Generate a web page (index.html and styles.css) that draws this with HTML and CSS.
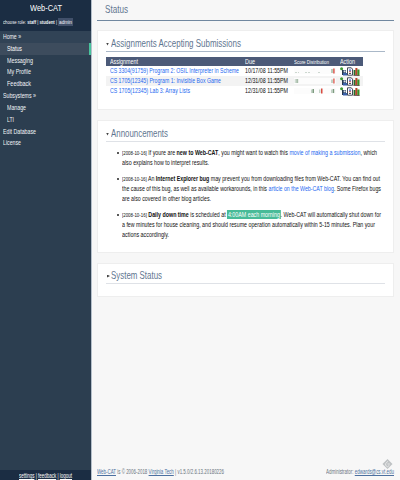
FILE: index.html
```html
<!DOCTYPE html>
<html lang="en">
<head>
<meta charset="utf-8">
<title>Web-CAT: Status</title>
<link rel="stylesheet" href="styles.css">
</head>
<body>
<svg class="defs" width="0" height="0">
  <symbol id="actions" viewBox="0 0 20 9">
    <circle cx="1.6" cy="1.8" r="1.5" fill="#3d9b35"/>
    <path d="M2 3h4v5H2z" fill="#26374f"/>
    <path d="M3.6 3.4h2v2h-2z" fill="#d5e4f4"/>
    <path d="M3 6h4v2.5H3z" fill="#3c61a8"/>
    <path d="M7.5.8h3.800l1.200 1.400v6h-5z" fill="#fff" stroke="#2f3446" stroke-width=".9"/>
    <path d="M9 2.4h2v1.300H9z" fill="#3b5fd0"/>
    <path d="M9 4.3h2v1H9z" fill="#b44"/>
    <path d="M9 6h2v1H9z" fill="#555"/>
    <path d="M13.6 3h2v5h-2z" fill="#26702a"/>
    <path d="M15.4 1h2v7h-2z" fill="#bb432b"/>
    <path d="M17.3 2.5h2.2v5.8h-2.2z" fill="#3b8f26"/>
    <path d="M13.4 8h6.2v.7h-6.2z" fill="#422"/>
  </symbol>
</svg>
<div class="page">
  <aside class="sidebar">
    <header class="brand">
      <div class="name"><span class="fit" data-w="32">Web-CAT</span></div>
      <div class="roles"><span class="fit" data-w="54">choose role: <b>staff</b> | <b>student</b> |</span><span class="role"><span class="fit" data-w="13">admin</span></span></div>
    </header>
    <nav>
      <a><span class="fit" data-w="18">Home »</span></a>
      <a class="sub active"><span class="fit" data-w="15">Status</span></a>
      <a class="sub"><span class="fit" data-w="26">Messaging</span></a>
      <a class="sub"><span class="fit" data-w="24">My Profile</span></a>
      <a class="sub"><span class="fit" data-w="24">Feedback</span></a>
      <a><span class="fit" data-w="33">Subsystems »</span></a>
      <a class="sub"><span class="fit" data-w="19">Manage</span></a>
      <a class="sub"><span class="fit" data-w="7">LTI</span></a>
      <a><span class="fit" data-w="33">Edit Database</span></a>
      <a><span class="fit" data-w="18">License</span></a>
    </nav>
    <footer class="session"><span class="fit" data-w="53"><u>settings</u> | <u>feedback</u> | <u>logout</u></span></footer>
  </aside>
  <main>
    <h1><span class="fit" data-w="23">Status</span></h1>
    <section class="card assignments">
      <h2><i class="open"></i><span class="fit" data-w="130">Assignments Accepting Submissions</span></h2>
      <div class="table">
        <div class="row head">
          <span><span class="fit" data-w="28">Assignment</span></span>
          <span><span class="fit" data-w="10">Due</span></span>
          <span><span class="fit small" data-w="35">Score Distribution</span></span>
          <span><span class="fit" data-w="15">Action</span></span>
        </div>
        <div class="row">
          <a><span class="fit" data-w="129">CS 3304(91759) Program 2: OSIL Interpreter in Scheme</span></a>
          <span><span class="fit" data-w="43">10/17/08 11:55PM</span></span>
          <svg class="dist" viewBox="0 0 42 6"><path d="M1 4.5h2M4 4.5h1M11 4.5h2M14 4.5h2M24 4.5h2" stroke="#b9c8bd" stroke-width=".7"/><path d="M37 1h2v4h-2z" fill="#b9cdbd"/><path d="M39.2.5h1.4v5h-1.4z" fill="#d94b41"/></svg>
          <svg class="icons"><use href="#actions"/></svg>
        </div>
        <div class="row alt">
          <a><span class="fit" data-w="111">CS 1705(12345) Program 1: Invisible Box Game</span></a>
          <span><span class="fit" data-w="43">12/31/08 11:55PM</span></span>
          <svg class="dist" viewBox="0 0 42 6"><path d="M.8 1h1v4h-1zM37 1.5h2v3.5h-2z" fill="#c4d3c7"/><path d="M2.2 1h2v4h-2z" fill="#a8bdaa"/><path d="M39.2.5h1.4v5h-1.4z" fill="#de6157"/></svg>
          <svg class="icons"><use href="#actions"/></svg>
        </div>
        <div class="row">
          <a><span class="fit" data-w="80">CS 1705(12345) Lab 3: Array Lists</span></a>
          <span><span class="fit" data-w="43">12/31/08 11:55PM</span></span>
          <svg class="dist" viewBox="0 0 42 6"><path d="M17 1.5h1.5v3.5H17zM25 1.5h1.5v3.5H25zM37 1.5h1.5v3.5H37z" fill="#c4d3c7"/><path d="M18.5 1H20v4h-1.5zM38.7 1h1.5v4h-1.5z" fill="#7e9c80"/><path d="M27 .5h1.5v5H27z" fill="#d94b41"/></svg>
          <svg class="icons"><use href="#actions"/></svg>
        </div>
      </div>
    </section>
    <section class="card announcements">
      <h2><i class="open"></i><span class="fit" data-w="57">Announcements</span></h2>
      <ul>
        <li>
          <p><span class="fit" data-w="255"><small>[2008-10-16]</small> If youre are <b>new to Web-CAT</b>, you might want to watch this <a>movie of making a submission</a>, which</span></p>
          <p><span class="fit" data-w="87">also explains how to interpret results.</span></p>
        </li>
        <li>
          <p><span class="fit" data-w="258"><small>[2008-10-16]</small> An <b>Internet Explorer bug</b> may prevent you from downloading files from Web-CAT. You can find out</span></p>
          <p><span class="fit" data-w="259">the cause of this bug, as well as available workarounds, in this <a>article on the Web-CAT blog</a>. Some Firefox bugs</span></p>
          <p><span class="fit" data-w="89">are also covered in other blog articles.</span></p>
        </li>
        <li>
          <p><span class="fit" data-w="259"><small>[2008-10-16]</small> <b>Daily down time</b> is scheduled at <mark>4:00AM each morning</mark>. Web-CAT will automatically shut down for</span></p>
          <p><span class="fit" data-w="253">a few minutes for house cleaning, and should resume operation automatically within 5-15 minutes. Plan your</span></p>
          <p><span class="fit" data-w="47">actions accordingly.</span></p>
        </li>
      </ul>
    </section>
    <section class="card system">
      <h2><i class="closed"></i><span class="fit" data-w="51">System Status</span></h2>
    </section>
    <footer class="about">
      <span class="fit" data-w="127"><u>Web-CAT</u> is © 2006-2018 <u>Virginia Tech</u> | v1.5.0/2.6.13.20180226</span>
      <div class="admin">
        <svg class="gem" viewBox="0 0 12 12"><path d="M6 .5 11.5 6 6 11.5.5 6z" fill="#bfc2c4"/><path d="M6.5 3 4 5.5v2L6 9l2-1.5M6 6h2.5" fill="none" stroke="#f7f7f7" stroke-width=".8"/></svg>
        <span class="fit" data-w="68">Administrator: <u>edwards@cs.vt.edu</u></span>
      </div>
    </footer>
  </main>
</div>
<script src="fit.js"></script>
</body>
</html>
```
FILE: styles.css
```css
* { box-sizing: border-box; }
body {
  margin: 0;
  background: #f7f7f7;
  color: #111;
  font: 7.4px/10px "Liberation Sans", sans-serif;
  overflow: hidden;
}
.defs { display: block; height: 0; }
.page { display: flex; width: 400px; height: 480px; }
.fit { display: inline-block; white-space: nowrap; transform-origin: 0 50%; }
a { color: #2468f0; }

.sidebar {
  display: flex;
  flex-direction: column;
  width: 92px;
  background: #2c3e50;
  border-right: 1px solid #b4bfca;
  color: #f2f5f8;
}
.brand { height: 31px; background: #1b2d43; }
.name { height: 15px; text-align: center; font-size: 9.8px; line-height: 15px; color: #fff; }
.roles { display: flex; gap: 1px; padding: 3px 0 0 3px; font-size: 6.2px; line-height: 8px; }
.role { height: 8px; padding: 0 1px; background: #41506a; }
nav { display: flex; flex-direction: column; flex: 1; }
nav a { height: 11.84px; padding-left: 3px; font-size: 7.4px; line-height: 12px; color: #f2f5f8; }
nav .sub { padding-left: 7px; }
nav a:first-child { background: #314356; }
nav .active { background: #3d4c5d; border-right: 2px solid #48c39d; color: #fff; }
.session { height: 10px; background: #1b2d43; text-align: center; font-size: 6.4px; line-height: 11px; color: #fff; }

main { display: flex; flex-direction: column; width: 308px; padding: 0 6px 0 5px; }
h1, h2 { margin: 0; font-weight: 400; color: #5f7690; }
h1 { height: 21px; margin-bottom: 9px; padding-left: 8px; border-bottom: 1px solid #7188a0; font-size: 10.3px; line-height: 20px; }
.card { padding: 7px 8px 0; background: #fff; border: 1px solid #eee; }
.assignments { height: 80px; margin-bottom: 10px; }
.announcements { height: 133px; margin-bottom: 10px; }
.system { height: 34px; padding-top: 6px; }
h2 { display: flex; align-items: center; height: 14px; padding-bottom: 1px; border-bottom: 1px solid #dfe2e7; font-size: 10.3px; line-height: 12px; }
.assignments h2 { border-color: #aab8c8; }
h2 i { width: 5px; }
h2 i::before { content: ""; display: block; width: 3px; height: 3px; background: #444; }
h2 .open::before { clip-path: polygon(0 0, 100% 0, 50% 100%); }
h2 .closed::before { margin-left: 1px; clip-path: polygon(0 0, 100% 50%, 0 100%); }

.table { width: 257px; margin-top: 5px; }
.row { display: grid; grid-template-columns: 135px 49px 46px 27px; height: 10px; align-items: center; padding-left: 3.5px; width: 257px; }
.row > * { height: 10px; }
.head { height: 9px; background: #4c5a78; color: #fff; font-size: 7.2px; line-height: 9px; }
.head .small { font-size: 6px; }
.head > * { height: 9px; }
.alt { background: #f3f3f3; }
.row .dist { width: 42px; height: 6px; background: #fcfcfc; }
.row .icons { width: 20px; height: 9px; }

ul { margin: 6px 0 0; padding: 0; list-style: none; }
li { position: relative; margin: 0 0 6px; padding-left: 16px; }
li::before { content: ""; position: absolute; left: 11px; top: 4px; width: 2px; height: 2px; border-radius: 1px; background: #222; }
p { margin: 0; height: 10px; }
small { font-size: 6.1px; }
mark { padding: 0 1px; background: #48bb98; color: #fff; }

.about { display: flex; justify-content: space-between; align-items: flex-end; flex: 1; padding-bottom: 3px; font-size: 6.3px; color: #6b7580; }
.about u { color: #4c70a0; }
.admin { display: flex; flex-direction: column; align-items: flex-end; }
.gem { width: 11px; height: 12px; margin: 0 1px -3px 0; }
```
FILE: fit.js
```js
document.querySelectorAll('.fit').forEach(function (el) {
  var target = parseFloat(el.dataset.w);
  var natural = el.getBoundingClientRect().width;
  el.style.transform = 'scaleX(' + target / natural + ')';
  el.style.width = target + 'px';
});
```
